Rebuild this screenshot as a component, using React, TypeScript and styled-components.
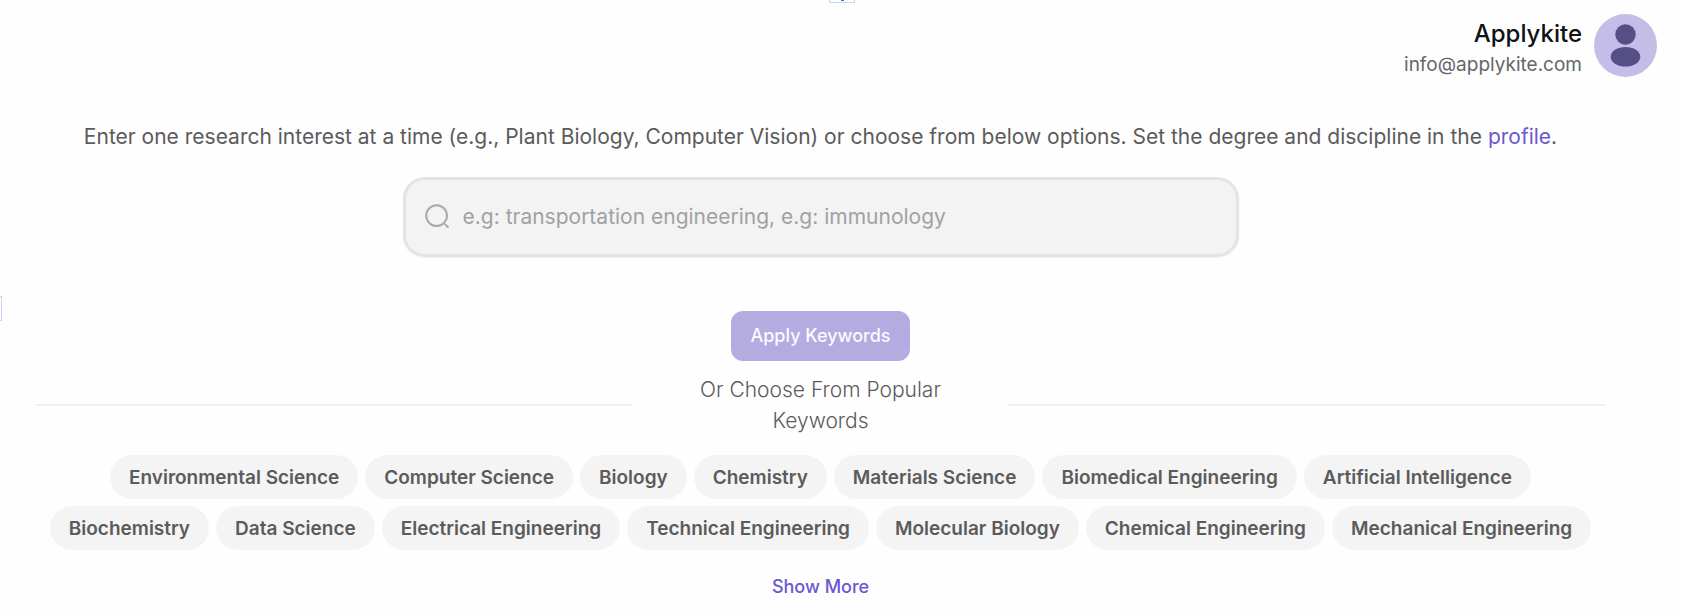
import React, { useState } from "react";
import styled, { createGlobalStyle } from "styled-components";

const GlobalStyle = createGlobalStyle`
  *, *::before, *::after { box-sizing: border-box; }
  body {
    margin: 0;
    background: #fefefe;
    color: #5b5b5b;
    font-family: Inter, "Liberation Sans", sans-serif;
  }
  button, input { font: inherit; color: inherit; }
  p { margin: 0; }
`;

const Page = styled.div`
  position: relative;
  padding: 14px 25px 8px 35px;
`;

const Handle = styled.span<{ $side: "top" | "left" }>`
  position: absolute;
  border: 1px solid #c7d5f8;
  ${({ $side }) =>
    $side === "top"
      ? "top: 0; left: 829px; width: 26px; height: 3px; border-top: 0;"
      : "left: 0; top: 296px; width: 2px; height: 25px; border-left: 0;"}

  &::after {
    content: ${({ $side }) => ($side === "top" ? '""' : "none")};
    position: absolute;
    top: 0;
    left: 11px;
    width: 3px;
    height: 1px;
    background: #3b6be8;
  }
`;

const Header = styled.header`
  display: flex;
  justify-content: flex-end;
  align-items: flex-start;
  gap: 12px;
`;

const Account = styled.div`
  padding-top: 4px;
  text-align: right;
`;

const Name = styled.p`
  color: #101214;
  font-size: 24px;
  font-weight: 500;
  line-height: 31px;
`;

const Email = styled.p`
  color: #666;
  font-size: 19px;
  line-height: 31px;
`;

const AvatarButton = styled.button`
  display: flex;
  padding: 0;
  border: 0;
  border-radius: 50%;
  background: none;
  cursor: pointer;
`;

const Main = styled.main`
  display: flex;
  flex-direction: column;
  align-items: center;
  margin-right: 51px;
`;

const Prompt = styled.label`
  margin-top: 41px;
  font-size: 21px;
  line-height: 32px;
  text-align: center;
`;

const Link = styled.a`
  color: #6c58cf;
  text-decoration: none;
`;

const SearchBox = styled.div`
  display: flex;
  align-items: center;
  gap: 14px;
  width: 100%;
  max-width: 836px;
  margin-top: 24px;
  padding: 21px 19px;
  border: 3px solid #e4e4e7;
  border-radius: 22px;
  background: #f3f3f3;
  box-shadow: 0 1px 2px rgba(0, 0, 0, 0.06);
`;

const SearchInput = styled.input`
  flex: 1;
  min-width: 0;
  padding: 0;
  border: 0;
  outline: 0;
  background: transparent;
  font-size: 21px;
  line-height: 32px;

  &::placeholder { color: #a1a1a3; opacity: 1; }
`;

const ApplyButton = styled.button`
  margin-top: 54px;
  padding: 9px 19px;
  border: 0;
  border-radius: 12px;
  background: #b4abe0;
  color: #fafaff;
  font-size: 18px;
  font-weight: 500;
  line-height: 32px;
  cursor: pointer;
`;

const Divider = styled.div`
  display: grid;
  grid-template-columns: 1fr 376px 1fr;
  align-items: center;
  width: 100%;
  margin-top: 13px;

  &::before, &::after {
    content: "";
    height: 2px;
    background: #f1f1f1;
  }
`;

const DividerText = styled.h2`
  margin: 0;
  padding: 0 56px;
  font-size: 21px;
  font-weight: 300;
  line-height: 31px;
  text-align: center;
`;

const Chips = styled.div`
  display: flex;
  flex-wrap: wrap;
  justify-content: center;
  gap: 7px;
  width: 100%;
  margin-top: 19px;
  padding: 0 8px;
`;

const Chip = styled.button`
  padding: 9px 19px 7px;
  border: 0;
  border-radius: 22px;
  background: #f4f4f4;
  font-size: 19px;
  font-weight: 600;
  line-height: 28px;
  cursor: pointer;
`;

const ShowMore = styled.button`
  margin-top: 23px;
  padding: 0;
  border: 0;
  background: none;
  color: #6c58cf;
  font-size: 18px;
  font-weight: 500;
  line-height: 28px;
  cursor: pointer;
`;

const keywords = [
  "Environmental Science",
  "Computer Science",
  "Biology",
  "Chemistry",
  "Materials Science",
  "Biomedical Engineering",
  "Artificial Intelligence",
  "Biochemistry",
  "Data Science",
  "Electrical Engineering",
  "Technical Engineering",
  "Molecular Biology",
  "Chemical Engineering",
  "Mechanical Engineering",
];

const Avatar = () => (
  <svg width="63" height="63" viewBox="0 0 63 63" aria-hidden="true">
    <circle cx="31.5" cy="31.5" r="31.5" fill="#c4bde8" />
    <circle cx="31.5" cy="20.5" r="10.2" fill="#564e87" />
    <ellipse cx="31.5" cy="42.8" rx="14.8" ry="9.8" fill="#564e87" />
  </svg>
);

const SearchIcon = () => (
  <svg width="24" height="26" viewBox="0 0 24 26" fill="none" stroke="#aaa9b3" strokeWidth="2" strokeLinecap="round" aria-hidden="true">
    <circle cx="11.6" cy="11.6" r="10.4" />
    <path d="M20.3 20.6 22.8 23" />
  </svg>
);

export default function App() {
  const [interest, setInterest] = useState("");
  return (
    <>
      <GlobalStyle />
      <Page>
        <Handle $side="top" />
        <Handle $side="left" />
        <Header>
          <Account>
            <Name>Applykite</Name>
            <Email>info@applykite.com</Email>
          </Account>
          <AvatarButton type="button" aria-label="Account">
            <Avatar />
          </AvatarButton>
        </Header>
        <Main>
          <Prompt htmlFor="interest">
            Enter one research interest at a time (e.g., Plant Biology, Computer Vision) or choose from below options. Set the degree and discipline in the <Link href="#profile">profile</Link>.
          </Prompt>
          <SearchBox>
            <SearchIcon />
            <SearchInput
              id="interest"
              type="text"
              placeholder="e.g: transportation engineering, e.g: immunology"
              value={interest}
              onChange={(e) => setInterest(e.target.value)}
            />
          </SearchBox>
          <ApplyButton type="button">Apply Keywords</ApplyButton>
          <Divider>
            <DividerText>Or Choose From Popular Keywords</DividerText>
          </Divider>
          <Chips>
            {keywords.map((k) => (
              <Chip key={k} type="button" onClick={() => setInterest(k)}>
                {k}
              </Chip>
            ))}
          </Chips>
          <ShowMore type="button">Show More</ShowMore>
        </Main>
      </Page>
    </>
  );
}
